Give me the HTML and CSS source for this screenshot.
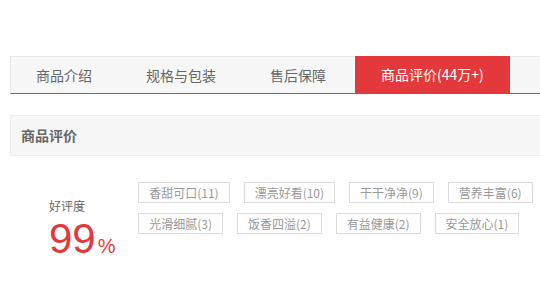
FILE: index.html
```html
<!DOCTYPE html>
<html lang="zh-CN">
<head>
<meta charset="utf-8">
<link rel="stylesheet" href="styles.css">
</head>
<body>
<div class="wrap">
  <ul class="tabs">
    <li class="tab">商品介绍</li>
    <li class="tab">规格与包装</li>
    <li class="tab">售后保障</li>
    <li class="tab active">商品评价(44万+)</li>
  </ul>
  <div class="section">
    <h3 class="section-title">商品评价</h3>
    <div class="comment-body">
      <div class="rate">
        <div class="rate-label">好评度</div>
        <div class="rate-value">99<span class="pct">%</span></div>
      </div>
      <ul class="tags">
        <li class="tag">香甜可口(11)</li>
        <li class="tag">漂亮好看(10)</li>
        <li class="tag">干干净净(9)</li>
        <li class="tag">营养丰富(6)</li>
        <li class="tag">光滑细腻(3)</li>
        <li class="tag">饭香四溢(2)</li>
        <li class="tag">有益健康(2)</li>
        <li class="tag">安全放心(1)</li>
      </ul>
    </div>
  </div>
</div>
</body>
</html>
```

FILE: styles.css
```css
* { box-sizing: border-box; }
html, body { margin: 0; padding: 0; background: #fff; overflow: hidden; }
body {
  font-family: "Microsoft YaHei", "Noto Sans CJK SC", "Liberation Sans", sans-serif;
  color: #666;
}
ul { list-style: none; margin: 0; padding: 0; }
.wrap { padding: 56px 0 0 10px; }
.tabs {
  display: flex;
  gap: 4px;
  height: 38px;
  background: #f7f7f7;
  border-top: 1px solid #e9e9e9;
  border-left: 1px solid #e9e9e9;
  border-bottom: 1px solid #e4393c;
}
.tab {
  padding: 0 25px;
  font-size: 14px;
  line-height: 36px;
  color: #666;
  white-space: nowrap;
}
.tab.active {
  margin-top: -1px;
  height: 37px;
  padding: 0 26px;
  line-height: 37px;
  background: #e4393c;
  color: #fff;
}
.section { margin-top: 21px; }
.section-title {
  margin: 0;
  height: 41px;
  padding-left: 10px;
  line-height: 39px;
  font-size: 14px;
  font-weight: bold;
  color: #666;
  background: #f7f7f7;
  border-top: 1px solid #eee;
  border-left: 1px solid #eee;
  border-bottom: 1px solid #eee;
}
.comment-body {
  display: flex;
  align-items: flex-start;
  padding-top: 26px;
}
.rate {
  width: 130px;
  padding-left: 39px;
}
.rate-label {
  margin-top: 15px;
  font-size: 12px;
  line-height: 18px;
  color: #666;
}
.rate-value {
  margin-top: 3px;
  font-family: "Liberation Sans", Arial, sans-serif;
  font-size: 42px;
  line-height: 42px;
  color: #e4393c;
}
.pct { font-size: 20px; margin-left: 2px; }
.tags {
  display: flex;
  flex-wrap: wrap;
  align-content: flex-start;
  gap: 10px 14px;
  width: 410px;
}
.tag {
  height: 21px;
  padding: 0 10px;
  border: 1px solid #dcdcdc;
  font-size: 12px;
  line-height: 19px;
  color: #999;
  white-space: nowrap;
}
```
